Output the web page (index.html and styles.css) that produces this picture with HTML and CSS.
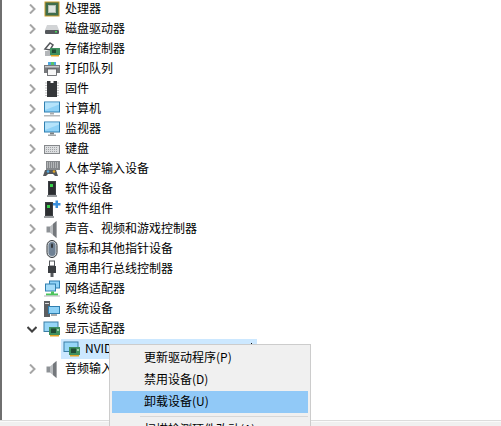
FILE: index.html
```html
<!DOCTYPE html>
<html lang="zh-CN">
<head>
<meta charset="utf-8">
<title>设备管理器</title>
<link rel="stylesheet" href="styles.css">
</head>
<body>
<svg class="defs" width="0" height="0" aria-hidden="true">
  <defs>
    <symbol id="chev-r" viewBox="0 0 10 10"><path d="M3 0.500l4.500 4.500-4.500 4.500" fill="none" stroke="#a6a6a6" stroke-width="2"/></symbol>
    <symbol id="chev-d" viewBox="0 0 10 10"><path d="M0.500 3l4.500 4.500 4.500-4.500" fill="none" stroke="#404040" stroke-width="2"/></symbol>
    <symbol id="monitor" viewBox="0 0 18 18">
      <rect x="1" y="1.500" width="16" height="11" fill="#2f7fb0"/>
      <rect x="2" y="2.500" width="14" height="9" fill="#8fd2f7"/>
      <path d="M2 2.500h14v2L2 10z" fill="#b5e3fb"/>
    </symbol>
    <symbol id="card" viewBox="0 0 18 18">
      <rect x="0.500" y="1.500" width="15" height="10.500" fill="#3b7ea6"/>
      <rect x="1.500" y="2.500" width="13" height="8.500" fill="#97d6f7"/>
      <rect x="6" y="7" width="11" height="8" fill="#3f8f5f"/>
      <rect x="8" y="8.500" width="5" height="4.500" fill="#204c33"/>
      <rect x="14" y="9" width="2" height="2" fill="#9dd0a8"/>
      <path d="M7 15h9v1.500H7z" fill="#e0a526"/>
    </symbol>
    <symbol id="speaker" viewBox="0 0 18 18">
      <path d="M3.500 6.500h4v6h-4z" fill="#8e9296"/>
      <path d="M7 6.500l6.500-5.500v17l-6.500-5.500z" fill="#b9bcbf"/>
      <path d="M10 4l3.500-3v17l-3.500-3z" fill="#74787c"/>
    </symbol>
    <symbol id="tower" viewBox="0 0 18 18">
      <rect x="5" y="1" width="8" height="14" fill="#3b3e42"/>
      <rect x="6" y="2" width="6" height="12" fill="#2c2e31"/>
      <rect x="4" y="15" width="10" height="2" fill="#9a9da0"/>
      <rect x="7" y="4" width="3" height="3" fill="#38d14a"/>
    </symbol>
  </defs>
</svg>
<div class="page">
  <main class="tree-pane">
    <ul class="tree">
      <li class="row">
        <svg class="chev"><use href="#chev-r"/></svg>
        <svg class="icon" viewBox="0 0 18 18"><rect x="1.500" y="1.500" width="15" height="15" fill="#c79b2c"/><rect x="2.500" y="2.500" width="13" height="13" fill="#3f6d4c"/><rect x="5" y="5" width="8" height="8" fill="#b3bfb5"/><rect x="6" y="6" width="6" height="6" fill="#dfe5e0"/></svg>
        <span class="label">处理器</span>
      </li>
      <li class="row">
        <svg class="chev"><use href="#chev-r"/></svg>
        <svg class="icon" viewBox="0 0 18 18"><path d="M4 5h10l2 5H2z" fill="#d2d4d6"/><rect x="2" y="10" width="14" height="4" rx="1" fill="#55585c"/><rect x="12" y="11" width="2" height="1.500" fill="#47d65a"/></svg>
        <span class="label">磁盘驱动器</span>
      </li>
      <li class="row">
        <svg class="chev"><use href="#chev-r"/></svg>
        <svg class="icon" viewBox="0 0 18 18"><path d="M2 9l5-6 3 2-3 5z" fill="none" stroke="#55585c" stroke-width="1.500"/><path d="M2 11h7v5H2z" fill="#b4b7ba"/><rect x="7" y="8" width="10" height="7" fill="#3f8f5f"/><rect x="9" y="9.500" width="4" height="3.500" fill="#204c33"/><path d="M8 15h8v1.500H8z" fill="#e0a526"/></svg>
        <span class="label">存储控制器</span>
      </li>
      <li class="row">
        <svg class="chev"><use href="#chev-r"/></svg>
        <svg class="icon" viewBox="0 0 18 18"><rect x="5" y="2" width="8" height="3" fill="#4ea7e0"/><rect x="8" y="2" width="3" height="3" fill="#57c46a"/><rect x="1" y="5" width="16" height="8" fill="#77797c"/><rect x="2" y="6" width="14" height="1.500" fill="#c6c8ca"/><rect x="4.500" y="9" width="9" height="6.500" fill="#f7f7f7" stroke="#55585c" stroke-width="0.800"/></svg>
        <span class="label">打印队列</span>
      </li>
      <li class="row">
        <svg class="chev"><use href="#chev-r"/></svg>
        <svg class="icon" viewBox="0 0 18 18"><path d="M4 1h3.500v2h3V1H14v16H4z" fill="#35373a"/><path d="M2.500 3h1M2.500 5.500h1M2.500 8h1M2.500 10.500h1M2.500 13h1M2.500 15.500h1M14.500 3h1M14.500 5.500h1M14.500 8h1M14.500 10.500h1M14.500 13h1M14.500 15.500h1" stroke="#8a8c8f"/></svg>
        <span class="label">固件</span>
      </li>
      <li class="row">
        <svg class="chev"><use href="#chev-r"/></svg>
        <svg class="icon" viewBox="0 0 18 18"><use href="#monitor" width="18" height="18"/><rect x="7" y="12.500" width="4" height="2" fill="#a9abad"/><rect x="1" y="15" width="16" height="1.500" fill="#b5b8ba"/></svg>
        <span class="label">计算机</span>
      </li>
      <li class="row">
        <svg class="chev"><use href="#chev-r"/></svg>
        <svg class="icon" viewBox="0 0 18 18"><use href="#monitor" width="18" height="18"/><rect x="7" y="12.500" width="4" height="2" fill="#7d8184"/><rect x="5" y="14.500" width="8" height="1.500" fill="#a4a7a9"/></svg>
        <span class="label">监视器</span>
      </li>
      <li class="row">
        <svg class="chev"><use href="#chev-r"/></svg>
        <svg class="icon" viewBox="0 0 18 18"><rect x="1" y="5" width="16" height="9" fill="#85888b"/><rect x="2" y="6" width="14" height="7" fill="#dcdee0"/><path d="M3 7.500h12M3 9.500h12M3 11.500h12" stroke="#a0a3a6" stroke-dasharray="1 1"/></svg>
        <span class="label">键盘</span>
      </li>
      <li class="row">
        <svg class="chev"><use href="#chev-r"/></svg>
        <svg class="icon" viewBox="0 0 18 18"><rect x="3" y="1" width="14" height="9" fill="#85888b"/><path d="M4 3h12M4 5h12M4 7h12" stroke="#e2e4e5" stroke-dasharray="1 1"/><path d="M2 10h11l2 6h-3l-2-2H5l-2 2H0z" fill="#55585c"/><circle cx="5" cy="11.500" r="1.300" fill="#4ea7e0"/><circle cx="11" cy="11.500" r="1.300" fill="#e0a526"/></svg>
        <span class="label">人体学输入设备</span>
      </li>
      <li class="row">
        <svg class="chev"><use href="#chev-r"/></svg>
        <svg class="icon" viewBox="0 0 18 18"><use href="#tower" width="18" height="18"/></svg>
        <span class="label">软件设备</span>
      </li>
      <li class="row">
        <svg class="chev"><use href="#chev-r"/></svg>
        <svg class="icon" viewBox="0 0 18 18"><use href="#tower" x="-3" y="1" width="18" height="18"/><path d="M10 3h2.500V0.500h2.500V3h2.500v2.500H15V8h-2.500V5.500H10z" fill="#3a8fdc"/></svg>
        <span class="label">软件组件</span>
      </li>
      <li class="row">
        <svg class="chev"><use href="#chev-r"/></svg>
        <svg class="icon" viewBox="0 0 18 18"><use href="#speaker" width="18" height="18"/></svg>
        <span class="label">声音、视频和游戏控制器</span>
      </li>
      <li class="row">
        <svg class="chev"><use href="#chev-r"/></svg>
        <svg class="icon" viewBox="0 0 18 18"><rect x="4" y="0.500" width="10" height="17" rx="5" fill="#d5dade" stroke="#33373b"/><rect x="5.500" y="2" width="7" height="14" rx="3.500" fill="#6f8194"/><rect x="8" y="3.500" width="2" height="4.500" rx="1" fill="#33373b"/></svg>
        <span class="label">鼠标和其他指针设备</span>
      </li>
      <li class="row">
        <svg class="chev"><use href="#chev-r"/></svg>
        <svg class="icon" viewBox="0 0 18 18"><rect x="6.500" y="1" width="5" height="5" fill="none" stroke="#55585c"/><rect x="5" y="6" width="8" height="7" fill="#3b3e42"/><rect x="7.500" y="13" width="3" height="4" fill="#55585c"/></svg>
        <span class="label">通用串行总线控制器</span>
      </li>
      <li class="row">
        <svg class="chev"><use href="#chev-r"/></svg>
        <svg class="icon" viewBox="0 0 18 18"><rect x="6" y="0.500" width="11" height="8" fill="#2f7fb0"/><rect x="7" y="1.500" width="9" height="6" fill="#8fd2f7"/><rect x="2" y="3.500" width="11" height="8" fill="#2f7fb0"/><rect x="3" y="4.500" width="9" height="6" fill="#a5dcf9"/><path d="M8 11.500h3v2h4v2H3v-2h5z" fill="#4cc45c"/><rect x="1" y="15.500" width="16" height="1" fill="#b5b8ba"/></svg>
        <span class="label">网络适配器</span>
      </li>
      <li class="row">
        <svg class="chev"><use href="#chev-r"/></svg>
        <svg class="icon" viewBox="0 0 18 18"><rect x="1" y="1" width="6" height="16" fill="#5b5e61"/><rect x="2" y="3" width="4" height="1" fill="#d8d9da"/><rect x="5" y="6" width="12" height="8" fill="#2f7fb0"/><rect x="6" y="7" width="10" height="6" fill="#8fd2f7"/><rect x="8" y="14" width="6" height="2" fill="#a9abad"/></svg>
        <span class="label">系统设备</span>
      </li>
      <li class="row">
        <svg class="chev"><use href="#chev-d"/></svg>
        <svg class="icon" viewBox="0 0 18 18"><use href="#card" width="18" height="18"/></svg>
        <span class="label">显示适配器</span>
      </li>
      <li class="row row-child">
        <div class="selected">
          <svg class="icon" viewBox="0 0 18 18"><use href="#card" width="18" height="18"/></svg>
          <span class="label">NVIDIA GeForce GT 730</span>
          <i class="pointer-tip"></i>
        </div>
      </li>
      <li class="row">
        <svg class="chev"><use href="#chev-r"/></svg>
        <svg class="icon" viewBox="0 0 18 18"><use href="#speaker" width="18" height="18"/></svg>
        <span class="label">音频输入和输出</span>
      </li>
    </ul>
  </main>
  <footer class="status"></footer>
  <nav class="menu">
    <div class="menu-item">更新驱动程序(P)</div>
    <div class="menu-item">禁用设备(D)</div>
    <div class="menu-item is-hot">卸载设备(U)</div>
    <div class="menu-sep"></div>
    <div class="menu-item">扫描检测硬件改动(A)</div>
    <div class="menu-sep"></div>
    <div class="menu-item">属性(R)</div>
  </nav>
</div>
</body>
</html>
```

FILE: styles.css
```css
* { box-sizing: border-box; }
html, body { margin: 0; padding: 0; background: #fff; }
body {
  width: 501px;
  height: 426px;
  overflow: hidden;
  font: 12px/20px "Noto Sans CJK SC", "Liberation Sans", sans-serif;
  color: #000;
}
.defs { display: block; height: 0; }
.page {
  position: relative;
  width: 501px;
  height: 426px;
  overflow: hidden;
  display: flex;
  flex-direction: column;
}
.tree-pane {
  flex: 1;
  min-height: 0;
  overflow: hidden;
  border-left: 2px solid #6f6f6f;
}
.tree {
  list-style: none;
  margin: -1px 0 0;
  padding: 0;
}
.row {
  display: flex;
  align-items: center;
  height: 20px;
  padding-left: 25px;
  white-space: nowrap;
}
.chev { width: 10px; height: 10px; flex: none; margin-right: 6px; }
.icon { width: 18px; height: 18px; flex: none; margin-right: 4px; }
.label { display: block; margin-top: -2px; }
.row-child { padding-left: 59px; }
.selected {
  position: relative;
  display: flex;
  align-items: center;
  width: 196px;
  height: 20px;
  padding-left: 2px;
  overflow: hidden;
  background: #cce8ff;
}
.pointer-tip {
  position: absolute;
  right: 5px;
  top: 4px;
  width: 1px;
  height: 2px;
  background: #111;
}
.status {
  flex: none;
  height: 6px;
  background: #f0f0f0;
  border-top: 1px solid #dcdcdc;
  box-shadow: inset 0 1px 0 #fafafa;
}
.menu {
  position: absolute;
  left: 109px;
  top: 344px;
  width: 202px;
  padding: 2px;
  background: #f0f0f0;
  border: 1px solid #ccc;
}
.menu-item {
  height: 22px;
  padding-left: 32px;
  line-height: 20px;
  white-space: nowrap;
}
.is-hot { background: #91c9f7; }
.menu-sep {
  height: 1px;
  margin: 3px 0 2px 28px;
  background: #d7d7d7;
}
```
